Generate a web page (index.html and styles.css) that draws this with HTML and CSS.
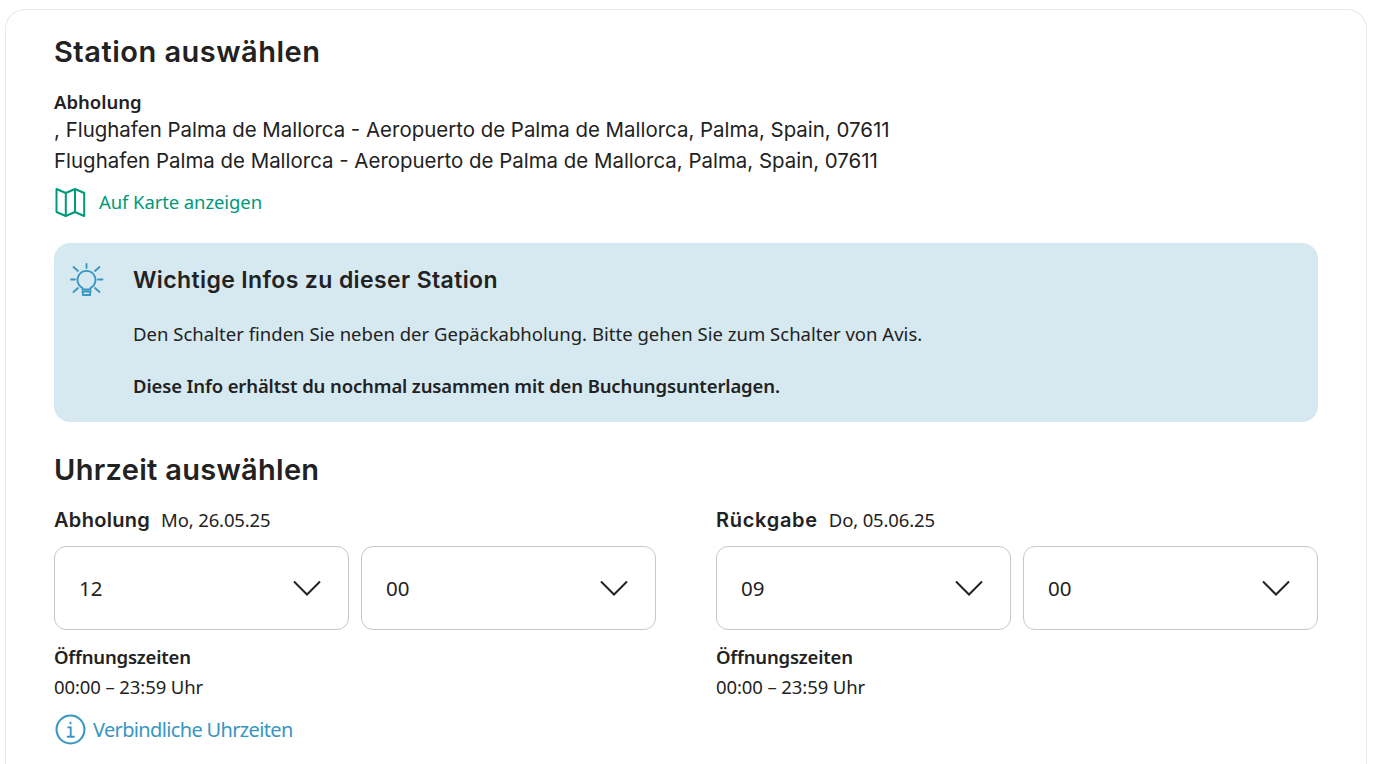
FILE: index.html
```html
<!DOCTYPE html>
<html lang="de">
<head>
<meta charset="utf-8">
<title>Station auswählen</title>
<link rel="stylesheet" href="styles.css">
</head>
<body>
<main class="card">
  <h1 class="heading">Station auswählen</h1>
  <div class="station">
    <div class="label">Abholung</div>
    <div class="address">, Flughafen Palma de Mallorca - Aeropuerto de Palma de Mallorca, Palma, Spain, 07611</div>
    <div class="address">Flughafen Palma de Mallorca - Aeropuerto de Palma de Mallorca, Palma, Spain, 07611</div>
  </div>
  <a class="map-link">
    <svg class="map-icon" viewBox="0 0 32 30" fill="none" stroke="#00997a" stroke-width="2" stroke-linejoin="round"><path d="M2.500 2 11.800 6 21 2 30.200 6V29L21 25 11.800 29 2.500 25Z"/><path d="M11.800 6V29M21 2V25"/></svg>
    <span>Auf Karte anzeigen</span>
  </a>
  <section class="info">
    <svg class="bulb" viewBox="0 0 34 34" fill="none" stroke="#3796c0" stroke-width="1.800" stroke-linecap="round"><path d="M12.500 25A9 9 0 1 1 20.500 25V26.500H12.500Z" stroke-linejoin="round"/><path d="M12.500 28.500h8L20 32h-7zM16.500 1v4M1 16.500H5M28 16.500h4.500M3.500 4 8 8M29.500 4 25 8M3.500 29 8 25M29.500 29 25 25"/></svg>
    <div class="info-body">
      <h2 class="info-title">Wichtige Infos zu dieser Station</h2>
      <p class="info-text">Den Schalter finden Sie neben der Gepäckabholung. Bitte gehen Sie zum Schalter von Avis.</p>
      <p class="info-text strong">Diese Info erhältst du nochmal zusammen mit den Buchungsunterlagen.</p>
    </div>
  </section>
  <h1 class="heading time-heading">Uhrzeit auswählen</h1>
  <div class="times">
    <div class="col">
      <div class="when"><strong>Abholung</strong><span>Mo, 26.05.25</span></div>
      <div class="selects">
        <div class="select"><span>12</span><svg class="chev" viewBox="0 0 28 16" fill="none" stroke="#222" stroke-width="2"><path d="M1 1.500 14 14.500 27 1.500"/></svg></div>
        <div class="select"><span>00</span><svg class="chev" viewBox="0 0 28 16" fill="none" stroke="#222" stroke-width="2"><path d="M1 1.500 14 14.500 27 1.500"/></svg></div>
      </div>
      <div class="hours-label">Öffnungszeiten</div>
      <div class="hours">00:00 – 23:59 Uhr</div>
      <a class="hint">
        <svg class="hint-icon" viewBox="0 0 30 30" fill="none" stroke="#3796c0" stroke-width="2"><circle cx="15" cy="15" r="13.500"/><path d="M15 7.500v2.500M12 13h3.200v9M11.500 22h7.500" stroke-width="1.800"/></svg>
        <span>Verbindliche Uhrzeiten</span>
      </a>
    </div>
    <div class="col">
      <div class="when when-return"><strong>Rückgabe</strong><span>Do, 05.06.25</span></div>
      <div class="selects">
        <div class="select"><span>09</span><svg class="chev" viewBox="0 0 28 16" fill="none" stroke="#222" stroke-width="2"><path d="M1 1.500 14 14.500 27 1.500"/></svg></div>
        <div class="select"><span>00</span><svg class="chev" viewBox="0 0 28 16" fill="none" stroke="#222" stroke-width="2"><path d="M1 1.500 14 14.500 27 1.500"/></svg></div>
      </div>
      <div class="hours-label">Öffnungszeiten</div>
      <div class="hours">00:00 – 23:59 Uhr</div>
    </div>
  </div>
</main>
</body>
</html>
```
FILE: styles.css
```css
* { box-sizing: border-box; }
html, body { height: 100%; }
body {
  margin: 0;
  background: #fff;
  color: #222;
  font-family: "Noto Sans", sans-serif;
  overflow: hidden;
  padding: 9px 9px 0 5px;
}
.card {
  height: 100%;
  overflow: hidden;
  border: 1px solid #e8e8e8;
  border-bottom: 0;
  border-radius: 20px 20px 0 0;
  padding: 24px 48px 0;
}
.heading {
  margin: 0;
  font: 600 29px/36px "Inter", sans-serif;
  letter-spacing: 0.5px;
}
.station { margin-top: 20px; }
.label {
  font-weight: 600;
  font-size: 18.500px;
  line-height: 24px;
}
.address {
  font: 400 20.450px/31px "Inter", sans-serif;
}
.map-link {
  display: flex;
  align-items: center;
  gap: 13px;
  margin-top: 11px;
  color: #00997a;
  font-size: 18.500px;
  line-height: 30px;
  letter-spacing: -0.1px;
}
.map-icon { width: 32px; height: 30px; }
.info {
  display: flex;
  margin-top: 26px;
  height: 179px;
  background: #d6e8f0;
  border-radius: 16px;
  padding: 20px 16px;
}
.bulb { width: 34px; height: 34px; flex: none; }
.info-body { margin-left: 29px; margin-top: -1px; }
.info-title {
  margin: 0;
  font: 600 23px/36px "Inter", sans-serif;
  letter-spacing: 0.38px;
}
.info-text {
  margin: 24px 0 0;
  font-size: 18.500px;
  line-height: 24px;
  letter-spacing: 0.02px;
}
.info-text.strong { font-weight: 600; margin-top: 28px; letter-spacing: -0.13px; }
.time-heading { margin-top: 30px; letter-spacing: 0.3px; }
.times {
  display: grid;
  grid-template-columns: 602px 602px;
  column-gap: 60px;
  margin-top: 18px;
}
.when { display: flex; align-items: baseline; gap: 11px; line-height: 28px; font-size: 18.500px; letter-spacing: -0.15px; }
.when strong { font: 600 20px/28px "Inter", sans-serif; letter-spacing: 0.3px; }
.when-return strong { letter-spacing: 0.7px; }
.selects { display: grid; grid-template-columns: 1fr 1fr; gap: 12px; margin-top: 12px; }
.select {
  display: flex;
  align-items: center;
  justify-content: space-between;
  height: 84px;
  border: 1px solid #c8c8c8;
  border-radius: 12px;
  padding: 0 27px 0 24px;
  font-size: 20.500px;
}
.chev { width: 28px; height: 16px; }
.hours-label { margin-top: 15px; font-weight: 600; font-size: 18.500px; line-height: 24px; letter-spacing: -0.2px; }
.hours { margin-top: 6px; font-size: 18.500px; line-height: 24px; letter-spacing: -0.1px; }
.hint {
  display: flex;
  align-items: center;
  gap: 7px;
  margin-top: 15px;
  color: #3796c0;
  font-size: 20px;
  line-height: 30px;
  letter-spacing: -0.65px;
}
.hint-icon { width: 31px; height: 31px; margin-left: 1px; }
```
